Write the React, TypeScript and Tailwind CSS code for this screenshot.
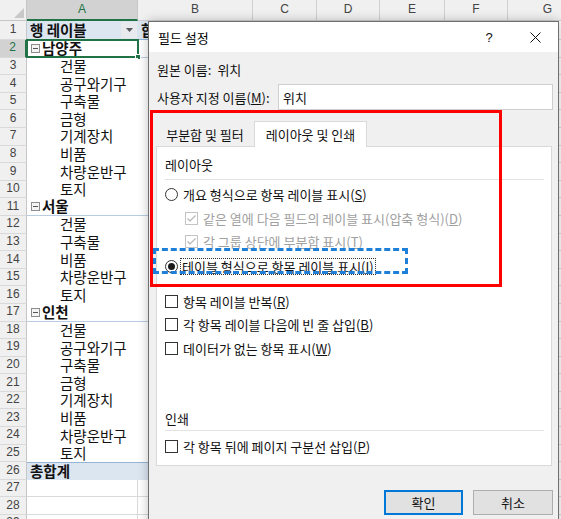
import React from 'react';

type Kind = 'head' | 'group' | 'item' | 'total' | 'empty';
type Row = { n: number; kind: Kind; text?: string };

const items1 = ['건물', '공구와기구', '구축물', '금형', '기계장치', '비품', '차량운반구', '토지'];
const items2 = ['건물', '구축물', '비품', '차량운반구', '토지'];

const rows: Row[] = [
  { n: 1, kind: 'head', text: '행 레이블' },
  { n: 2, kind: 'group', text: '남양주' },
  ...items1.map((t, i) => ({ n: 3 + i, kind: 'item' as Kind, text: t })),
  { n: 11, kind: 'group', text: '서울' },
  ...items2.map((t, i) => ({ n: 12 + i, kind: 'item' as Kind, text: t })),
  { n: 17, kind: 'group', text: '인천' },
  ...items1.map((t, i) => ({ n: 18 + i, kind: 'item' as Kind, text: t })),
  { n: 26, kind: 'total', text: '총합계' },
  { n: 27, kind: 'empty' },
  { n: 28, kind: 'empty' },
  { n: 29, kind: 'empty' },
];

const rest = [64, 63, 65, 63, 80];
const letters = ['C', 'D', 'E', 'F', 'G'];

function MinusBox() {
  return (
    <span className="w-[9px] h-[9px] border border-[#8c8c8c] bg-[#f4f4f4] flex items-center justify-center shrink-0 mr-[2px]">
      <span className="w-[5px] h-px bg-[#555]" />
    </span>
  );
}

function SheetRow({ r }: { r: Row }) {
  const h = r.n === 1 ? 'h-[19px]' : 'h-[17.6px]';
  const sel = r.n === 2;
  let aCls = 'w-[111px] shrink-0 flex items-center relative';
  let bCls = 'w-[115px] shrink-0 flex items-center overflow-hidden whitespace-nowrap';
  let aContent: React.ReactNode = null;
  let bContent: React.ReactNode = null;
  if (r.kind === 'head') {
    aCls += ' bg-[#dce6f1] border-b border-[#95b3d7] font-bold pl-[3px]';
    bCls += ' bg-[#dce6f1] border-b border-[#95b3d7] font-bold pl-[3px]';
    aContent = (
      <>
        <span>{r.text}</span>
        <span className="ml-auto mr-[1px] w-[16px] h-[16px] bg-[#e8eaed] flex items-center justify-center">
          <svg width="7" height="4" viewBox="0 0 7 4"><path d="M0 0h7L3.5 4z" fill="#5a5a5a" /></svg>
        </span>
      </>
    );
    bContent = <span>합계 : 금액</span>;
  } else if (r.kind === 'group') {
    aCls += ' bg-white border-b border-[#b8cce4] font-bold pl-[4px]';
    bCls += ' bg-white border-b border-[#b8cce4]';
    aContent = (
      <>
        <MinusBox />
        <span>{r.text}</span>
      </>
    );
  } else if (r.kind === 'item') {
    aCls += ' bg-white pl-[33px]';
    bCls += ' bg-white';
    aContent = <span>{r.text}</span>;
  } else if (r.kind === 'total') {
    aCls += ' bg-[#dce6f1] border-t border-[#95b3d7] font-bold pl-[3px]';
    bCls += ' bg-[#dce6f1] border-t border-[#95b3d7]';
    aContent = <span>{r.text}</span>;
  } else {
    aCls += ' bg-white border-r border-b border-[#dadada]';
    bCls += ' bg-white border-r border-b border-[#dadada]';
  }
  return (
    <div className={`flex ${h} shrink-0`}>
      <div
        className={`w-[27px] shrink-0 flex items-center justify-center border-b border-[#d9d9d9] text-[12px] font-['Liberation_Sans',sans-serif] ${
          sel ? 'bg-[#d2d2d2] text-[#217346] border-r-2 border-r-[#217346]' : 'bg-[#f0f0f0] text-[#444] border-r border-r-[#c6c6c6]'
        }`}
      >
        {r.n}
      </div>
      <div className={aCls}>
        {aContent}
        {sel && (
          <span className="absolute -left-px -top-px -right-px -bottom-px border-2 border-[#217346]">
            <span className="absolute -right-[4px] -bottom-[4px] w-[6px] h-[6px] bg-[#217346] border border-white" />
          </span>
        )}
      </div>
      <div className={bCls}>{bContent}</div>
      {rest.map((w, i) => (
        <div key={i} style={{ width: w }} className="shrink-0 border-r border-b border-[#dadada] bg-white" />
      ))}
    </div>
  );
}

function Check({ checked, disabled }: { checked?: boolean; disabled?: boolean }) {
  return (
    <span
      className={`w-[13px] h-[13px] shrink-0 border bg-white flex items-center justify-center ${
        disabled ? 'border-[#c4c4c4]' : 'border-[#333]'
      }`}
    >
      {checked && (
        <svg width="11" height="11" viewBox="0 0 11 11">
          <path d="M1.5 5.5L4 8l5.5-5.5" fill="none" stroke={disabled ? '#b4b4b4' : '#333'} strokeWidth="1.1" />
        </svg>
      )}
    </span>
  );
}

function Radio({ on }: { on?: boolean }) {
  return (
    <span className="w-[13px] h-[13px] shrink-0 rounded-full border border-[#333] bg-white flex items-center justify-center">
      {on && <span className="w-[7px] h-[7px] rounded-full bg-[#1a1a1a]" />}
    </span>
  );
}

function Acc({ pre, k }: { pre: string; k: string }) {
  return (
    <span className="whitespace-nowrap">
      {pre}(<span className="underline">{k}</span>)
    </span>
  );
}

export default function App() {
  return (
    <div className="relative w-[561px] h-[519px] overflow-hidden bg-white font-['Noto_Sans_CJK_KR',sans-serif] text-[#111]">
      {/* spreadsheet */}
      <div className="flex flex-col text-[14.5px] leading-[1.15]">
        <div className="flex h-[21px] shrink-0 text-[12px] font-['Liberation_Sans',sans-serif]">
          <div className="w-[27px] shrink-0 bg-[#f0f0f0] border-r border-b border-[#c6c6c6] flex items-end justify-end p-[2px]">
            <svg width="10" height="10" viewBox="0 0 10 10"><path d="M10 0v10H0z" fill="#c8c8c8" /></svg>
          </div>
          <div className="w-[111px] shrink-0 bg-[#d2d2d2] text-[#217346] border-r border-r-[#c6c6c6] border-b-2 border-b-[#217346] flex items-center justify-center">
            A
          </div>
          <div className="w-[115px] shrink-0 bg-[#f0f0f0] text-[#444] border-r border-b border-[#d0d0d0] flex items-center justify-center">
            B
          </div>
          {rest.map((w, i) => (
            <div
              key={i}
              style={{ width: w }}
              className="shrink-0 bg-[#f0f0f0] text-[#444] border-r border-b border-[#d0d0d0] flex items-center justify-center"
            >
              {letters[i]}
            </div>
          ))}
        </div>
        {rows.map((r) => (
          <SheetRow key={r.n} r={r} />
        ))}
      </div>

      {/* dialog */}
      <div className="absolute left-[148px] top-[21px] w-[411px] h-[515px] border border-[#6f6f6f] bg-[#f0f0f0] shadow-[0_0_10px_rgba(0,0,0,0.25)] flex flex-col text-[13px] leading-none text-[#111]">
        <div className="h-[30px] shrink-0 bg-white flex items-center">
          <span className="pl-[9px] text-[#000]">필드 설정</span>
          <div className="ml-auto flex h-full">
            <span className="w-[46px] h-full flex items-center justify-center text-[13px] font-['Liberation_Sans',sans-serif]">?</span>
            <span className="w-[46px] h-full flex items-center justify-center">
              <svg width="11" height="11" viewBox="0 0 11 11">
                <path d="M0.5 0.5l10 10M10.5 0.5l-10 10" stroke="#111" strokeWidth="1" />
              </svg>
            </span>
          </div>
        </div>

        <div className="flex items-center h-[16px] mt-[9px] pl-[8px] gap-[6px]">
          <span>원본 이름:</span>
          <span>위치</span>
        </div>

        <div className="flex items-center mt-[7px] pl-[8px] pr-[5px]">
          <span className="w-[121px] shrink-0 whitespace-nowrap">
            사용자 지정 이름(<span className="underline">M</span>):
          </span>
          <div className="flex-1 h-[26px] bg-white border border-[#cfcfcf] flex items-center pl-[4px]">위치</div>
        </div>

        {/* tabs */}
        <div className="mt-[11px] ml-[7px] w-[396px] flex flex-col">
          <div className="flex h-[25px] items-end">
            <div className="w-[98px] h-[23px] flex items-center justify-center whitespace-nowrap">부분합 및 필터</div>
            <div className="w-[113px] h-[26px] -mb-px relative z-10 bg-white border border-b-0 border-[#d9d9d9] flex items-center justify-center whitespace-nowrap">
              레이아웃 및 인쇄
            </div>
          </div>
          <div className="h-[320px] bg-white border border-[#d9d9d9] flex flex-col pl-[8px] pr-[7px]">
            <div className="h-[20px] mt-[7px] flex items-center">레이아웃</div>
            <div className="h-px bg-[#e3e3e3] mt-[5px]" />
            <div className="h-[24px] mt-[2px] flex items-center gap-[5px]">
              <Radio />
              <Acc pre="개요 형식으로 항목 레이블 표시" k="S" />
            </div>
            <div className="h-[24px] flex items-center gap-[5px] pl-[20px] text-[#a0a0a0]">
              <Check checked disabled />
              <Acc pre="같은 열에 다음 필드의 레이블 표시(압축 형식)" k="D" />
            </div>
            <div className="h-[23px] flex items-center gap-[5px] pl-[20px] text-[#a0a0a0]">
              <Check checked disabled />
              <Acc pre="각 그룹 상단에 부분합 표시" k="T" />
            </div>
            <div className="h-[26px] flex items-center gap-[2px]">
              <Radio on />
              <span className="border border-dotted border-[#333] h-[17px] flex items-center px-[1px]">
                <Acc pre="테이블 형식으로 항목 레이블 표시" k="I" />
              </span>
            </div>
            <div className="h-[24px] mt-[10px] flex items-center gap-[5px]">
              <Check />
              <Acc pre="항목 레이블 반복" k="R" />
            </div>
            <div className="h-[23px] flex items-center gap-[5px]">
              <Check />
              <Acc pre="각 항목 레이블 다음에 빈 줄 삽입" k="B" />
            </div>
            <div className="h-[24px] flex items-center gap-[5px]">
              <Check />
              <Acc pre="데이터가 없는 항목 표시" k="W" />
            </div>
            <div className="h-[20px] mt-[48px] flex items-center">인쇄</div>
            <div className="h-px bg-[#e3e3e3] mt-[2px]" />
            <div className="h-[24px] mt-[3px] flex items-center gap-[5px]">
              <Check />
              <Acc pre="각 항목 뒤에 페이지 구분선 삽입" k="P" />
            </div>
          </div>
        </div>

        <div className="flex justify-end gap-[10px] mt-[24px] pr-[5px]">
          <button className="w-[79px] h-[25px] bg-[#e1e1e1] border-2 border-[#0078d7] flex items-center justify-center">
            확인
          </button>
          <button className="w-[80px] h-[25px] bg-[#e1e1e1] border border-[#adadad] flex items-center justify-center">
            취소
          </button>
        </div>
      </div>

      {/* annotations */}
      <div className="absolute left-[150px] top-[110px] w-[352px] h-[177px] border-[3px] border-[#ff0000] pointer-events-none" />
      <div className="absolute left-[153px] top-[248px] w-[255px] h-[26px] border-[3px] border-dashed border-[#1d7fd8] pointer-events-none" />
    </div>
  );
}
